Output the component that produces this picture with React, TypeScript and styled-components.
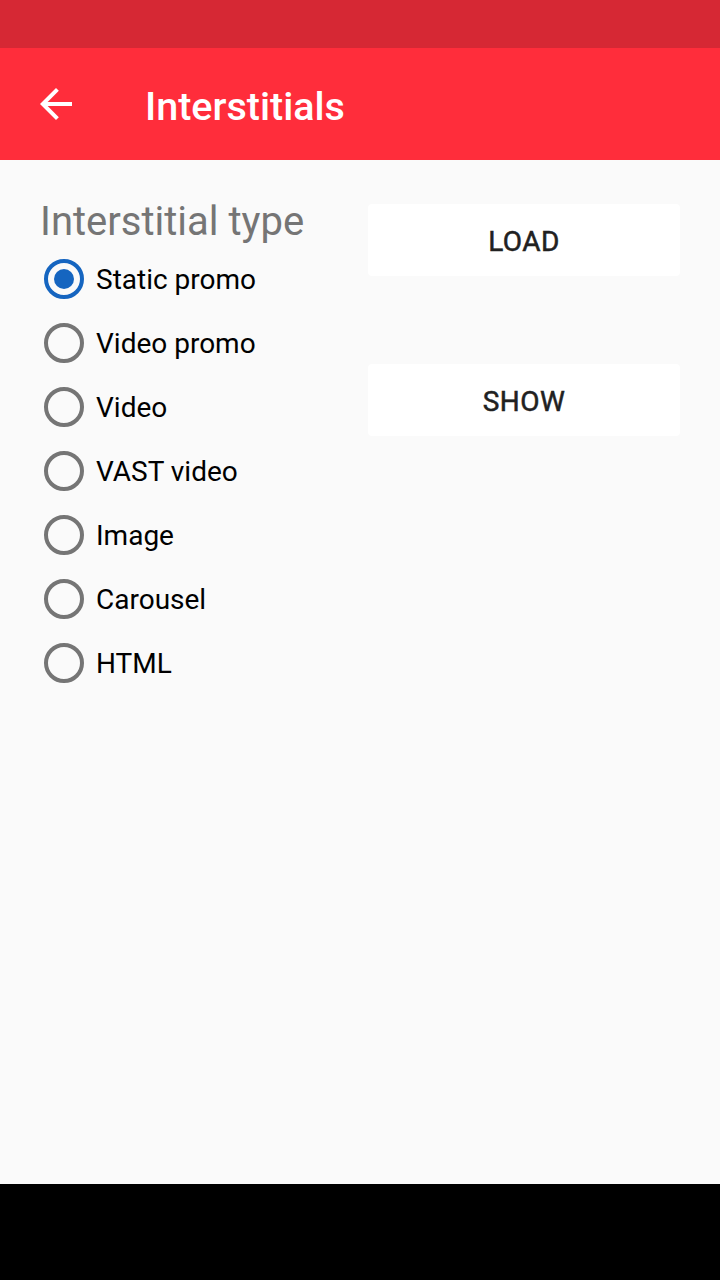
import React, { useState } from "react";
import styled, { createGlobalStyle } from "styled-components";

const Global = createGlobalStyle`
  html, body { margin: 0; padding: 0; }
  body { font-family: Roboto, "Noto Sans", sans-serif; background: #fafafa; }
`;

const Screen = styled.div`
  width: 720px;
  height: 1280px;
  display: flex;
  flex-direction: column;
  background: #fafafa;
  overflow: hidden;
`;

const StatusBar = styled.div`
  height: 48px;
  flex: none;
  background: #d62834;
`;

const Toolbar = styled.header`
  height: 112px;
  flex: none;
  background: #ff2d3b;
  display: flex;
  align-items: center;
`;

const NavButton = styled.button`
  width: 112px;
  height: 112px;
  border: none;
  background: transparent;
  padding: 0;
  display: flex;
  align-items: center;
  justify-content: center;
  flex: none;
`;

const Title = styled.h1`
  margin: 4px 0 0 33px;
  font-family: Roboto, sans-serif;
  font-weight: 500;
  font-size: 39.5px;
  color: #ffffff;
`;

const Content = styled.main`
  flex: 1;
  display: grid;
  grid-template-columns: 328px 312px;
  padding: 44px 40px 0 40px;
  align-content: start;
`;

const RadioGroup = styled.div`
  display: flex;
  flex-direction: column;
`;

const GroupLabel = styled.div`
  font-size: 40px;
  color: #757575;
  line-height: 36px;
  height: 43px;
  white-space: nowrap;
`;

const Option = styled.label`
  display: flex;
  align-items: center;
  height: 64px;
  cursor: pointer;
`;

const Circle = styled.span<{ $checked: boolean }>`
  box-sizing: border-box;
  width: 40px;
  height: 40px;
  margin-left: 4px;
  border-radius: 50%;
  border: 4px solid ${(p) => (p.$checked ? "#1565c0" : "#757575")};
  display: flex;
  align-items: center;
  justify-content: center;
  flex: none;
  &::after {
    content: "";
    width: 20px;
    height: 20px;
    border-radius: 50%;
    background: ${(p) => (p.$checked ? "#1565c0" : "transparent")};
  }
`;

const OptionText = styled.span`
  margin-left: 12px;
  font-size: 28px;
  color: #000000;
`;

const Buttons = styled.div`
  display: flex;
  flex-direction: column;
  gap: 88px;
`;

const Button = styled.button`
  height: 72px;
  padding: 2px 0 0 0;
  border: none;
  border-radius: 4px;
  background: #ffffff;
  font-family: Roboto, sans-serif;
  font-weight: 400;
  font-size: 28px;
  color: #212121;
  -webkit-text-stroke: 0.5px #212121;
  letter-spacing: 0.4px;
  text-transform: uppercase;
`;

const NavBar = styled.div`
  height: 96px;
  flex: none;
  background: #000000;
`;

const options = [
  "Static promo",
  "Video promo",
  "Video",
  "VAST video",
  "Image",
  "Carousel",
  "HTML",
];

export default function App() {
  const [sel, setSel] = useState(0);
  return (
    <>
      <Global />
      <Screen>
        <StatusBar />
        <Toolbar>
          <NavButton aria-label="Back">
            <svg width="48" height="48" viewBox="0 0 24 24">
              <path
                fill="#ffffff"
                d="M20 11H7.83l5.59-5.59L12 4l-8 8 8 8 1.41-1.41L7.83 13H20v-2z"
              />
            </svg>
          </NavButton>
          <Title>Interstitials</Title>
        </Toolbar>
        <Content>
          <RadioGroup>
            <GroupLabel>Interstitial type</GroupLabel>
            {options.map((o, i) => (
              <Option key={o} onClick={() => setSel(i)}>
                <Circle $checked={sel === i} />
                <OptionText>{o}</OptionText>
              </Option>
            ))}
          </RadioGroup>
          <Buttons>
            <Button>Load</Button>
            <Button>Show</Button>
          </Buttons>
        </Content>
        <NavBar />
      </Screen>
    </>
  );
}
